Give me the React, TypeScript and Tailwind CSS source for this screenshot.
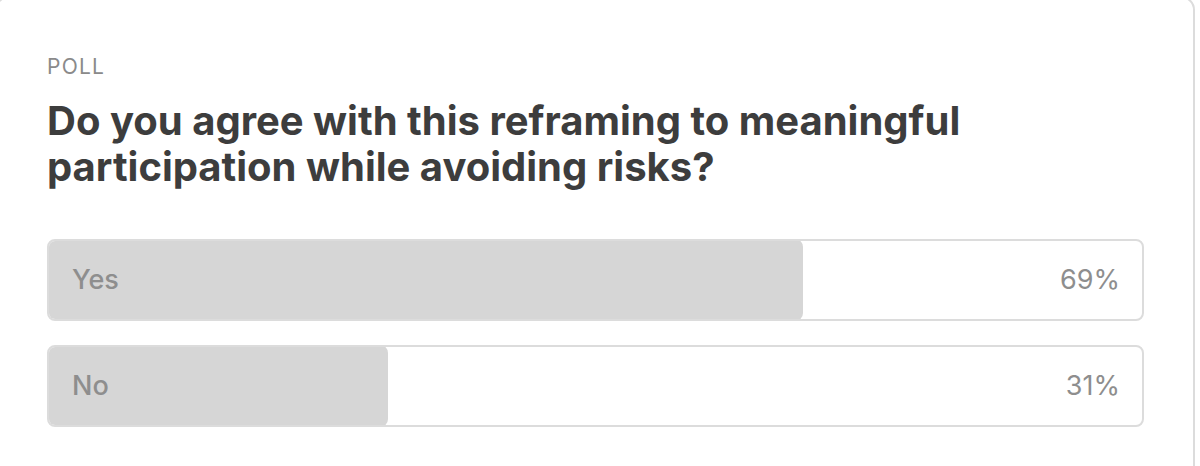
import React from 'react';

const options = [
  { label: 'Yes', percent: 69 },
  { label: 'No', percent: 31 },
];

export default function App() {
  return (
    <div className="w-[1200px] h-[466px] overflow-hidden bg-white font-['Inter',sans-serif]">
      <div className="-ml-[5px] -mt-[4px] w-[1200px] h-[520px] rounded-[14px] border-2 border-[#dcdcdc] bg-white pl-[50px] pr-[49px] pt-[55px]">
        <div className="text-[21px] leading-[28px] tracking-[0.06em] text-[#8a8a8a]">POLL</div>
        <h2 className="mt-[17px] text-[40px] leading-[46px] font-bold text-[#3d3d3d]">
          Do you agree with this reframing to meaningful
          <br />
          participation while avoiding risks?
        </h2>
        <div className="mt-[49px] flex flex-col gap-[24px]">
          {options.map((o) => (
            <div
              key={o.label}
              className="relative h-[82px] rounded-[8px] border-2 border-[#dcdcdc] overflow-hidden"
            >
              <div
                className="absolute -left-[2px] -top-[2px] -bottom-[2px] rounded-[8px] bg-[#d6d6d6]"
                style={{ width: `calc(${o.percent}% + 2px)` }}
              />
              <div className="relative flex h-full items-center justify-between pl-[23px] pr-[22px] text-[27px] text-[#8e8e8e]">
                <span className="font-medium">{o.label}</span>
                <span>{o.percent}%</span>
              </div>
            </div>
          ))}
        </div>
      </div>
    </div>
  );
}
